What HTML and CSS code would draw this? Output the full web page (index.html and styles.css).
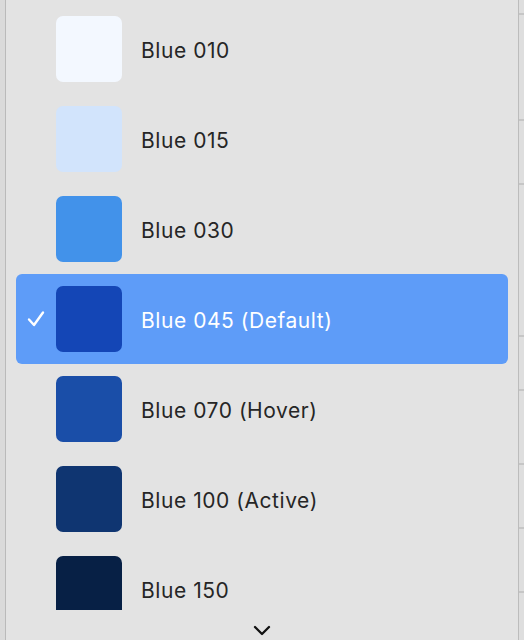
FILE: index.html
```html
<!DOCTYPE html>
<html>
<head>
<meta charset="utf-8">
<link rel="stylesheet" href="styles.css">
</head>
<body>
<div class="edge-left"></div>
<div class="menu">
  <div class="list">
    <div class="row"><span class="check"></span><span class="swatch" style="background:#f3f8ff"></span><span class="label">Blue 010</span></div>
    <div class="row"><span class="check"></span><span class="swatch" style="background:#d2e4fc"></span><span class="label">Blue 015</span></div>
    <div class="row"><span class="check"></span><span class="swatch" style="background:#4292ea"></span><span class="label">Blue 030</span></div>
    <div class="row selected"><span class="check"><svg width="20" height="20" viewBox="0 0 20 20"><path d="M3 10.5 L8 16 L17 3.5" fill="none" stroke="#fff" stroke-width="2.4" stroke-linecap="round" stroke-linejoin="round"/></svg></span><span class="swatch" style="background:#1446b6"></span><span class="label">Blue 045 (Default)</span></div>
    <div class="row"><span class="check"></span><span class="swatch" style="background:#1a4ea8"></span><span class="label">Blue 070 (Hover)</span></div>
    <div class="row"><span class="check"></span><span class="swatch" style="background:#0f3571"></span><span class="label">Blue 100 (Active)</span></div>
    <div class="row"><span class="check"></span><span class="swatch" style="background:#072045"></span><span class="label">Blue 150</span></div>
  </div>
  <div class="footer">
    <svg width="18" height="12" viewBox="0 0 18 12"><path d="M2 3 L9 10 L16 3" fill="none" stroke="#111" stroke-width="2.3" stroke-linecap="round" stroke-linejoin="round"/></svg>
  </div>
</div>
<div class="edge-right">
  <div class="tick" style="top:13px"></div>
  <div class="tick" style="top:119px"></div>
  <div class="tick" style="top:183px"></div>
  <div class="tick" style="top:335px"></div>
  <div class="tick" style="top:389px"></div>
  <div class="tick" style="top:463px"></div>
  <div class="tick" style="top:527px"></div>
  <div class="tick" style="top:591px"></div>
</div>
</body>
</html>
```
FILE: styles.css
```css
html, body {
  margin: 0;
  padding: 0;
}
body {
  width: 524px;
  height: 640px;
  overflow: hidden;
  display: flex;
  background: #dcdcdc;
  font-family: Inter, "Liberation Sans", sans-serif;
}
.edge-left {
  width: 5px;
  flex: none;
  background: #dadada;
  border-right: 1px solid #bababa;
}
.menu {
  width: 512px;
  flex: none;
  background: #e3e3e3;
  display: flex;
  flex-direction: column;
  border-right: 1px solid #bcbcbc;
}
.list {
  height: 606px;
  padding-top: 4px;
  overflow: hidden;
  display: flex;
  flex-direction: column;
}
.row {
  flex: none;
  height: 90px;
  margin: 0 10px;
  display: flex;
  align-items: center;
  border-radius: 6px;
  color: #262626;
}
.row .check {
  width: 40px;
  height: 20px;
  display: flex;
  justify-content: center;
  align-items: center;
}
.row .swatch {
  width: 66px;
  height: 66px;
  border-radius: 7px;
  flex: none;
}
.row .label {
  margin-left: 19px;
  padding-top: 3px;
  font-size: 21px;
  letter-spacing: 0.55px;
}
.row.selected {
  background: #5e9cf8;
  color: #ffffff;
}
.footer {
  flex: 1;
  display: flex;
  justify-content: center;
  align-items: flex-start;
  padding-top: 14px;
}
.edge-right {
  flex: 1;
  position: relative;
  background: #dedede;
}
.tick {
  position: absolute;
  left: 0;
  right: 0;
  height: 2px;
  background: #c6c6c6;
}
```
